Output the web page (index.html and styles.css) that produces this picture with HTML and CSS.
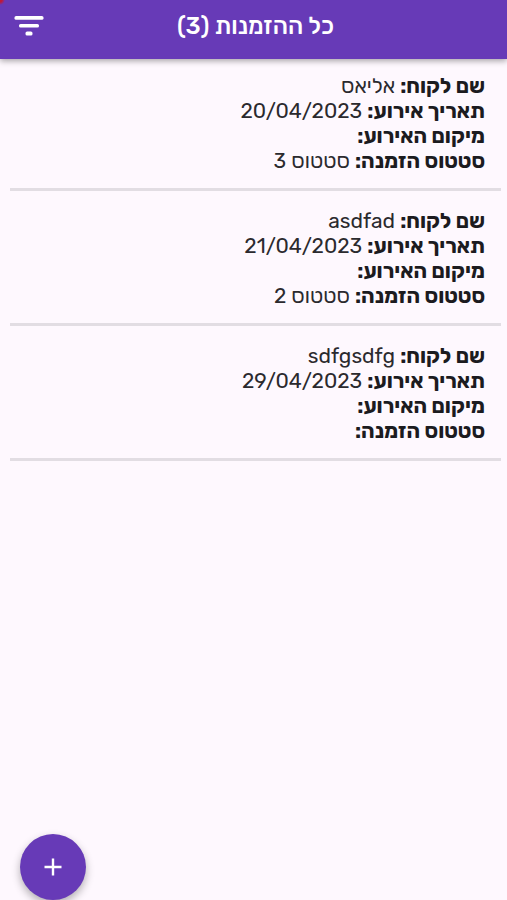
FILE: index.html
```html
<!DOCTYPE html>
<html lang="he" dir="rtl">
  <head>
    <meta charset="UTF-8" />
    <meta name="viewport" content="width=device-width, initial-scale=1.0" />
    <title>כל ההזמנות</title>
    <link rel="stylesheet" href="styles.css">
  </head>
  <body>
    <header class="app-bar">
      <h1 class="title">כל ההזמנות (3)</h1>
      <button class="filter-btn" type="button" aria-label="סינון">
        <svg width="30" height="20" viewBox="0 0 30 20" fill="#fff">
          <rect x="0.5" y="0" width="29" height="3.8" rx="1.6" />
          <rect x="5" y="8" width="20" height="3.6" rx="1.6" />
          <rect x="11.5" y="15.6" width="7" height="4" rx="1.6" />
        </svg>
      </button>
    </header>

    <main class="orders">
      <article class="order">
        <p><b>שם לקוח:</b> אליאס</p>
        <p><b>תאריך אירוע:</b> 20/04/2023</p>
        <p><b>מיקום האירוע:</b></p>
        <p><b>סטטוס הזמנה:</b> סטטוס 3</p>
      </article>
      <article class="order">
        <p><b>שם לקוח:</b> <bdi>asdfad</bdi></p>
        <p><b>תאריך אירוע:</b> 21/04/2023</p>
        <p><b>מיקום האירוע:</b></p>
        <p><b>סטטוס הזמנה:</b> סטטוס 2</p>
      </article>
      <article class="order">
        <p><b>שם לקוח:</b> <bdi>sdfgsdfg</bdi></p>
        <p><b>תאריך אירוע:</b> 29/04/2023</p>
        <p><b>מיקום האירוע:</b></p>
        <p><b>סטטוס הזמנה:</b></p>
      </article>
    </main>

    <button class="add-btn" type="button" aria-label="הזמנה חדשה">
      <svg width="18" height="18" viewBox="0 0 18 18" stroke="#fff" stroke-width="2.4">
        <path d="M9 0.5v17M0.5 9h17" />
      </svg>
    </button>
  </body>
</html>
```

FILE: styles.css
```css
* {
  box-sizing: border-box;
}

body {
  margin: 0;
  min-height: 100vh;
  background-color: #fef8fe;
  color: #2b2a2e;
  font-family: Rubik, "Open Sans", "Liberation Sans", sans-serif;
  font-size: 21px;
  line-height: 25px;
}

b {
  color: #1c1b1f;
  font-weight: 700;
}

.app-bar {
  position: relative;
  display: flex;
  align-items: center;
  justify-content: center;
  height: 59px;
  padding: 0 0 7px 4px;
  background: radial-gradient(circle at 0 0, #c01838 2px, #673ab7 5px);
  color: #fff;
  box-shadow: 0 2px 6px rgba(0, 0, 0, 0.35);
}

.title {
  margin: 0;
  font-size: 24px;
  font-weight: 500;
}

.filter-btn {
  position: absolute;
  left: 14px;
  top: 16px;
  display: flex;
  padding: 0;
  border: 0;
  background: none;
  cursor: pointer;
}

.orders {
  display: flex;
  flex-direction: column;
  gap: 3px;
  padding: 0 6px 0 10px;
}

.order {
  padding: 14px 16px 15px;
  border-bottom: 3px solid #e2dde3;
}

.order p {
  margin: 0;
}

.add-btn {
  position: fixed;
  left: 20px;
  bottom: 0;
  display: flex;
  align-items: center;
  justify-content: center;
  width: 66px;
  height: 66px;
  padding: 0;
  border: 0;
  border-radius: 50%;
  background-color: #673ab7;
  box-shadow: 0 4px 8px rgba(0, 0, 0, 0.3);
  cursor: pointer;
}
```
